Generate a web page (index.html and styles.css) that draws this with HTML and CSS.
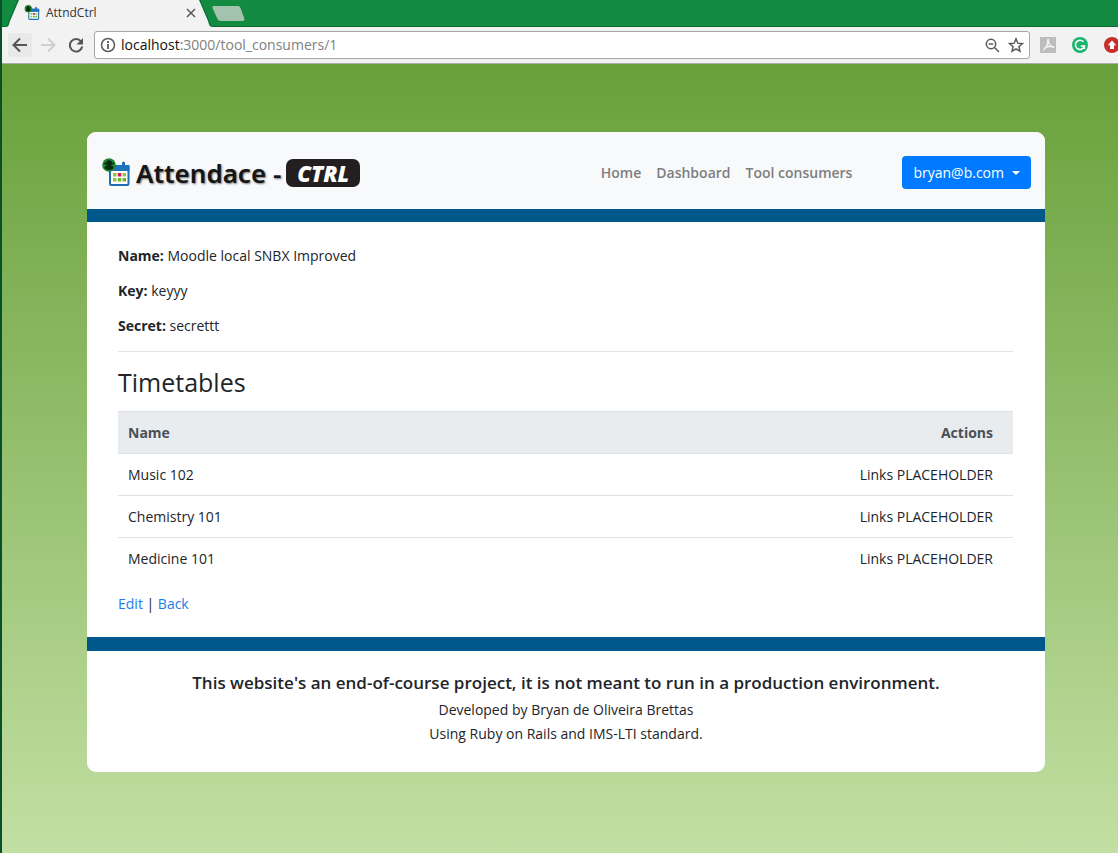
FILE: index.html
```html
<!DOCTYPE html>
<html lang="en">
<head>
<meta charset="utf-8">
<title>AttndCtrl</title>
<link rel="stylesheet" href="styles.css">
</head>
<body>
<svg class="symbols" aria-hidden="true">
  <symbol id="calendar" viewBox="0 0 28 30">
    <rect x="8" y="8" width="18.500" height="19" rx="1.500" fill="#fff" stroke="#1c6fb5" stroke-width="2"/>
    <path d="M7 7h20.500v6H7z" fill="#1c75bc"/>
    <path d="M21.500 5v4" stroke="#1c6fb5" stroke-width="3" stroke-linecap="round"/>
    <path d="M11 15h3.500v3.500H11zM20.500 15h3.500v3.500h-3.500zM11 20h3.500v3.500H11z" fill="#8dc63f"/>
    <path d="M15.800 15h3.500v3.500h-3.500z" fill="#d4145a"/>
    <path d="M15.800 20h3.500v3.500h-3.500zM20.500 20h3.500v3.500h-3.500z" fill="#6ab52f"/>
    <circle cx="7" cy="7" r="6.800" fill="#20852f"/>
    <circle cx="7" cy="5.200" r="3" fill="#082b10"/>
    <path d="M2.500 10c0-2 2-2.500 4.500-2.500s4.500.5 4.500 2.500c-2 2.500-7 2.500-9 0z" fill="#082b10"/>
    <path d="M2 5l2 1M12 5l-2 1" stroke="#0a3513" stroke-width="1.500"/>
  </symbol>
</svg>
<div class="window">
  <header class="browser">
    <div class="tabs">
      <svg class="tab-shape" viewBox="0 0 260 27" aria-hidden="true">
        <path d="M2 26.500h5L18 0h182l11 26.500h49" fill="none" stroke="#0a6a31"/>
        <path d="M6 27C9 27 9 24 10 21L19 0H199l9 21c1 3 1 6 5 6z" fill="#f2f2f2"/>
        <path d="M213 6h25q2 0 2.500 2l4 11q0 2-2 2h-22q-2 0-3-2l-5-11q0-2 .5-2z" fill="#a3c3af"/>
      </svg>
      <div class="tab">
        <svg class="favicon" aria-hidden="true"><use href="#calendar"/></svg>
        <span class="tab-title">AttndCtrl</span>
        <button class="icon-button close" type="button" aria-label="Close tab">
          <svg width="10" height="10" viewBox="0 0 10 10"><path d="M1 1l8 8M9 1L1 9" stroke="#5a5a5a" stroke-width="1.500"/></svg>
        </button>
      </div>
    </div>
    <div class="toolbar">
      <button class="icon-button back" type="button" aria-label="Back">
        <svg width="16" height="16" viewBox="0 0 16 16" fill="none" stroke="#555" stroke-width="2"><path d="M15 8H2M8 1.500L1.500 8 8 14.500"/></svg>
      </button>
      <button class="icon-button" type="button" aria-label="Forward">
        <svg width="16" height="16" viewBox="0 0 16 16" fill="none" stroke="#cfcfcf" stroke-width="2"><path d="M1 8h13M8 1.500L14.500 8 8 14.500"/></svg>
      </button>
      <button class="icon-button" type="button" aria-label="Reload">
        <svg width="16" height="16" viewBox="0 0 16 16"><path d="M13 4.500A6.200 6.200 0 1 0 14.200 9.500" fill="none" stroke="#555" stroke-width="2"/><path d="M15 1v6.500H8.500z" fill="#555"/></svg>
      </button>
      <div class="address">
        <svg width="16" height="16" viewBox="0 0 16 16"><circle cx="8" cy="8" r="6.500" fill="none" stroke="#5a5a5a" stroke-width="1.500"/><path d="M8 4v2M8 7v5" stroke="#5a5a5a" stroke-width="1.800"/></svg>
        <div class="url" role="textbox" aria-label="Address" tabindex="0"><span class="host">localhost</span>:3000/tool_consumers/1</div>
        <button class="icon-button" type="button" aria-label="Zoom">
          <svg width="15" height="15" viewBox="0 0 15 15" fill="none" stroke="#5a5a5a" stroke-width="1.500"><circle cx="6" cy="6" r="4.700"/><path d="M3.800 6h4.400M9.500 9.500l4.500 4.500"/></svg>
        </button>
        <button class="icon-button" type="button" aria-label="Bookmark this page">
          <svg width="16" height="16" viewBox="0 0 16 16"><path d="M8 1.800l1.800 4.400 4.700.4-3.600 3.100 1.100 4.600L8 11.800l-4 2.500 1.100-4.600L1.500 6.600l4.700-.4z" fill="none" stroke="#555" stroke-width="1.400"/></svg>
        </button>
      </div>
      <div class="extensions">
        <button class="icon-button extension" type="button" aria-label="PDF">
          <svg width="16" height="16" viewBox="0 0 16 16"><path d="M0 0h16v16H0z" fill="#bdbdbd"/><path d="M3 13c3-2 5-6 4.500-9.500C7.500 2 9 2 8.700 4 8 7 11 10 13.500 10.500 15 9 9 8.500 4.500 11" fill="none" stroke="#f2f2f2" stroke-width="1.300"/></svg>
        </button>
        <button class="icon-button extension" type="button" aria-label="Grammar checker">
          <svg width="16" height="16" viewBox="0 0 16 16"><circle cx="8" cy="8" r="8" fill="#1bb56e"/><path d="M11.500 4.800A4.600 4.600 0 1 0 12.500 9H8.800M12.400 8.500v3.500" fill="none" stroke="#fff" stroke-width="1.500"/></svg>
        </button>
        <button class="icon-button extension" type="button" aria-label="Upload">
          <svg width="16" height="16" viewBox="0 0 16 16"><circle cx="8" cy="8" r="8" fill="#c5302b"/><path d="M8 3.500l4.200 4.800H10V12H6V8.300H3.800z" fill="#fff"/></svg>
        </button>
      </div>
    </div>
  </header>
  <div class="page">
    <div class="card">
      <header class="site-header">
        <a class="brand" href="#" aria-label="Attendace - CTRL">
          <svg class="brand-icon" aria-hidden="true"><use href="#calendar"/></svg>
          <span class="brand-name">Attendace -</span>
          <span class="brand-badge">CTRL</span>
        </a>
        <nav class="nav">
          <a href="#">Home</a>
          <a href="#">Dashboard</a>
          <a href="#">Tool consumers</a>
        </nav>
        <button class="user" type="button" aria-haspopup="menu">bryan@b.com <span class="caret"></span></button>
      </header>
      <main class="content">
        <p><strong>Name:</strong> Moodle local SNBX Improved</p>
        <p><strong>Key:</strong> keyyy</p>
        <p><strong>Secret:</strong> secrettt</p>
        <hr>
        <h1>Timetables</h1>
        <table>
          <thead>
            <tr><th scope="col">Name</th><th scope="col">Actions</th></tr>
          </thead>
          <tbody>
            <tr><td>Music 102</td><td>Links PLACEHOLDER</td></tr>
            <tr><td>Chemistry 101</td><td>Links PLACEHOLDER</td></tr>
            <tr><td>Medicine 101</td><td>Links PLACEHOLDER</td></tr>
          </tbody>
        </table>
        <div class="actions"><a href="#">Edit</a> | <a href="#">Back</a></div>
      </main>
      <footer class="site-footer">
        <p class="notice">This website's an end-of-course project, it is not meant to run in a production environment.</p>
        <p>Developed by Bryan de Oliveira Brettas</p>
        <p>Using Ruby on Rails and IMS-LTI standard.</p>
      </footer>
    </div>
  </div>
</div>
</body>
</html>
```
FILE: styles.css
```css
* { box-sizing: border-box; }

body {
  margin: 0;
  font-family: "Open Sans", "Noto Sans", sans-serif;
  font-size: 14px;
  line-height: 20px;
  color: #212529;
}

.symbols { position: absolute; width: 0; height: 0; }

.window {
  display: flex;
  flex-direction: column;
  min-height: 100vh;
  overflow: hidden;
  border-left: 2px solid #07502a;
}

.browser { background: #f2f2f2; border-bottom: 1px solid #a9adab; }

.tabs {
  display: grid;
  background: #128a40;
  border-bottom: 1px solid #0a6a31;
  height: 27px;
}
.tabs > * { grid-area: 1 / 1; }
.tab-shape { width: 260px; height: 27px; margin-left: -2px; }
.tab {
  display: flex;
  align-items: center;
  width: 198px;
  height: 26px;
  padding-left: 22px;
  z-index: 1;
}
.favicon { width: 16px; height: 16px; margin-right: 6px; }
.tab-title { flex: 1; font-size: 12px; color: #333; }

.icon-button {
  display: flex;
  flex: none;
  align-items: center;
  justify-content: center;
  width: 24px;
  height: 24px;
  padding: 0;
  border: 0;
  border-radius: 2px;
  background: none;
}
.icon-button svg, .address svg { display: block; flex: none; }
.icon-button.close { width: 18px; height: 18px; }
.icon-button.back { background: #e9e9e9; }
.icon-button.extension { width: 16px; }

.toolbar {
  display: flex;
  align-items: center;
  gap: 4px;
  height: 36px;
  margin-right: -2px;
  padding-left: 6px;
}
.address {
  display: flex;
  flex: 1;
  align-items: center;
  height: 28px;
  margin-left: 2px;
  padding: 0 1px 0 5px;
  border: 1px solid #a6a6a6;
  border-radius: 3px;
  background: #fff;
}
.url { flex: 1; margin-left: 5px; color: #808080; }
.host { color: #111; }
.extensions { display: flex; gap: 16px; margin: 0 0 0 6px; }
.toolbar { margin-right: -2px; }

.page {
  flex: 1;
  padding: 68px 73px 81px 85px;
  background: linear-gradient(#68a03a, #c2dfa3);
}
.card { overflow: hidden; border-radius: 9px; background: #fff; }

.site-header {
  display: flex;
  align-items: center;
  height: 90px;
  padding: 4px 14px 0 15px;
  border-bottom: 13px solid #00578a;
  background: #f8f9fa;
}
.brand { display: flex; align-items: center; color: #151515; text-decoration: none; }
.brand-icon { width: 28px; height: 30px; margin-right: 6px; }
.brand-name {
  font-family: "Noto Sans", sans-serif;
  font-size: 26px;
  font-weight: 600;
  line-height: 30px;
  text-shadow: 1px 1px 2px #777;
}
.brand-badge {
  margin-left: 5px;
  padding: 0 11px;
  border-radius: 7px;
  background: #231f20;
  color: #fff;
  font-size: 22px;
  font-style: italic;
  font-weight: 800;
  line-height: 28px;
}
.nav { display: flex; gap: 15px; margin: 0 50px 0 auto; }
.nav a { color: #7d7e7f; font-weight: 600; text-decoration: none; }
.user {
  display: flex;
  align-items: center;
  gap: 8px;
  height: 33px;
  padding: 0 11px;
  border: 0;
  border-radius: 4px;
  background: #007bff;
  color: #fff;
  font: inherit;
}
.caret { border: 4px solid transparent; border-top-color: #fff; border-bottom: 0; }

.content { padding: 24px 32px 23px 31px; }
.content p { margin: 0 0 15px; }
hr { height: 1px; margin: 0 0 16px; border: 0; background: #e3e4e5; }
h1 { margin: 0 0 14px; font-size: 25px; font-weight: 500; line-height: 29px; }
table { width: 100%; border-collapse: collapse; }
th, td { padding: 11px 20px 10px 10px; border-top: 1px solid #dee2e6; text-align: left; }
th { background: #e9ecef; color: #495057; font-weight: 700; }
th:last-child, td:last-child { text-align: right; }
.actions { margin-top: 15px; }
.actions a { color: #1a7de8; text-decoration: none; }

.site-footer {
  padding: 20px 20px 26px;
  border-top: 14px solid #00578a;
  font-weight: 500;
  text-align: center;
}
.site-footer p { margin: 0; line-height: 24px; }
.site-footer .notice { margin-bottom: 3px; font-size: 17px; font-weight: 600; }
```
